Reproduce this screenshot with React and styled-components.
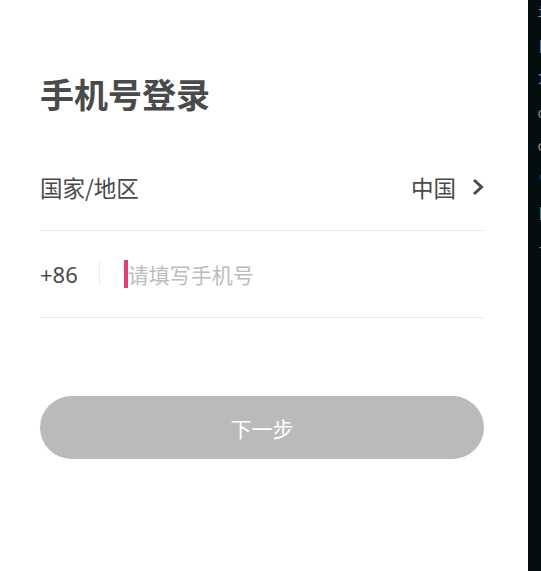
import React from "react";
import styled, { createGlobalStyle } from "styled-components";

const GlobalStyle = createGlobalStyle`
  html, body {
    margin: 0;
    padding: 0;
    height: 100%;
    background: #ffffff;
  }
  #root {
    height: 100%;
  }
`;

const Screen = styled.div`
  display: flex;
  width: 541px;
  height: 571px;
  overflow: hidden;
  font-family: "Noto Sans CJK SC", "Noto Sans", sans-serif;
`;

const Panel = styled.div`
  width: 528px;
  flex: none;
  background: #fff;
  padding: 70px 44px 0 40px;
  box-sizing: border-box;
`;

const Title = styled.h1`
  margin: 0 0 26px 0;
  font-size: 34px;
  line-height: 48px;
  font-weight: 700;
  color: #4a4a4a;
`;

const Row = styled.div`
  display: flex;
  align-items: center;
  height: 86px;
  border-bottom: 1px solid #ececec;
`;

const Label = styled.span`
  font-size: 22.5px;
  color: #4a4a4a;
`;

const Value = styled.span`
  margin-left: auto;
  display: flex;
  align-items: center;
  gap: 16px;
  font-size: 22.5px;
  color: #4a4a4a;
`;

const Prefix = styled.span`
  font-family: "Noto Sans", sans-serif;
  font-size: 22px;
  color: #4a4a4a;
  padding-right: 21px;
  border-right: 1px solid #ececec;
  line-height: 24px;
`;

const InputBox = styled.div`
  display: flex;
  align-items: center;
  margin-left: 24px;
`;

const Caret = styled.span`
  width: 4px;
  height: 28px;
  background: #e23e7c;
`;

const Placeholder = styled.span`
  font-size: 21px;
  color: #bdbdbd;
`;

const NextButton = styled.button`
  display: block;
  width: 100%;
  height: 63px;
  margin-top: 78px;
  border: none;
  border-radius: 32px;
  background: #bababa;
  color: #fff;
  font-family: inherit;
  font-size: 21px;
`;

const Console = styled.div`
  flex: 1;
  background: #050e0e;
  padding: 0 0 0 9px;
  font-family: "DejaVu Sans Mono", monospace;
  font-size: 14px;
  line-height: 33.5px;
  color: #8a8f8f;
  white-space: pre;
  overflow: hidden;
`;

const ConsoleText = styled.div`
  margin-top: -4px;
`;

const Chevron = () => (
  <svg width="12" height="18" viewBox="0 0 12 18" fill="none">
    <path d="M2 2l7.5 7L2 16" stroke="#4a4a4a" strokeWidth="3" />
  </svg>
);

const lines = ["i", "[", "1", "c", "c", "'", "[", "-"];

export default function App() {
  return (
    <>
      <GlobalStyle />
      <Screen>
        <Panel>
          <Title>手机号登录</Title>
          <Row>
            <Label>国家/地区</Label>
            <Value>
              中国
              <Chevron />
            </Value>
          </Row>
          <Row>
            <Prefix>+86</Prefix>
            <InputBox>
              <Caret />
              <Placeholder>请填写手机号</Placeholder>
            </InputBox>
          </Row>
          <NextButton>下一步</NextButton>
        </Panel>
        <Console>
          <ConsoleText>{lines.join("\n")}</ConsoleText>
        </Console>
      </Screen>
    </>
  );
}
